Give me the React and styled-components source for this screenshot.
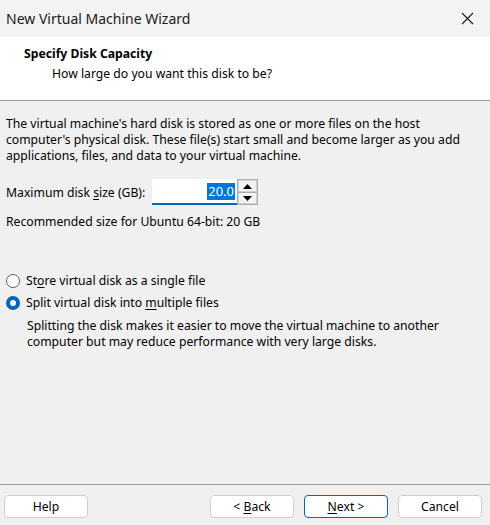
import styled, { createGlobalStyle } from "styled-components"

const GlobalStyle = createGlobalStyle`
  html, body {
    margin: 0;
    padding: 0;
    background: #f0f0f0;
  }
  body {
    font-family: "Noto Sans", "Open Sans", sans-serif;
    font-size: 12.2px;
    color: #000000;
  }
`

const Window = styled.div`
  width: 490px;
  height: 525px;
  display: flex;
  flex-direction: column;
  background: #f0f0f0;
  overflow: hidden;
`

const TitleBar = styled.div`
  height: 37px;
  flex-shrink: 0;
  display: flex;
  align-items: center;
  justify-content: space-between;
  padding-left: 6px;
  background: #f3f3f3;
  font-size: 14px;
  color: #1a1a1a;
`

const CloseButton = styled.div`
  width: 46px;
  height: 37px;
  display: flex;
  align-items: center;
  justify-content: center;
`

const Header = styled.div`
  height: 64px;
  flex-shrink: 0;
  background: #ffffff;
  border-bottom: 1px solid #a0a0a0;
  padding: 9px 0 0 24px;
  box-sizing: border-box;
`

const Heading = styled.div`
  font-weight: 700;
  font-size: 12.2px;
  line-height: 16px;
`

const SubHeading = styled.div`
  margin-top: 4px;
  padding-left: 28px;
  line-height: 16px;
`

const Content = styled.div`
  flex: 1;
  padding: 15px 6px 0 6px;
  display: flex;
  flex-direction: column;
`

const Paragraph = styled.p`
  margin: 0;
  line-height: 16px;
  white-space: nowrap;
`

const SizeRow = styled.div`
  display: flex;
  align-items: center;
  margin-top: 15px;
  height: 26px;
`

const SizeLabel = styled.span`
  width: 146px;
`

const Input = styled.div`
  width: 85px;
  height: 26px;
  box-sizing: border-box;
  background: #ffffff;
  border-bottom: 2px solid #0067c0;
  display: flex;
  align-items: center;
  justify-content: flex-end;
  padding-right: 2px;
`

const Selected = styled.span`
  background: #0078d7;
  color: #ffffff;
  font-size: 13px;
  line-height: 17px;
  padding: 0 1px;
`

const Spinner = styled.div`
  width: 21px;
  height: 26px;
  box-sizing: border-box;
  border: 1px solid #adadad;
  display: flex;
  flex-direction: column;
  background: #e5e5e5;
`

const SpinButton = styled.div`
  flex: 1;
  display: flex;
  align-items: center;
  justify-content: center;
  background: #f3f3f3;
  border: 1px solid #d0d0d0;
  & + & {
    border-top: 1px solid #adadad;
  }
`

const Recommended = styled.div`
  margin-top: 9px;
  line-height: 16px;
`

const Options = styled.div`
  margin-top: 43px;
  display: flex;
  flex-direction: column;
  gap: 6px;
`

const RadioRow = styled.label`
  display: flex;
  align-items: center;
  gap: 6px;
  height: 16px;
  line-height: 16px;
`

const RadioCircle = styled.span`
  width: 14px;
  height: 14px;
  box-sizing: border-box;
  border-radius: 50%;
  flex-shrink: 0;
  border: ${(p) => (p.$checked ? "4px solid #0067c0" : "1px solid #5d5d5d")};
  background: #ffffff;
`

const Description = styled.div`
  margin-top: 7px;
  padding-left: 21px;
`

const Footer = styled.div`
  flex-shrink: 0;
  height: 41px;
  border-top: 1px solid #a0a0a0;
  display: flex;
  align-items: flex-start;
  padding: 10px 8px 0 4px;
  box-sizing: border-box;
`

const Spacer = styled.div`
  flex: 1;
`

const Button = styled.button`
  width: 84px;
  height: 23px;
  box-sizing: border-box;
  margin-left: ${(p) => p.$gap || 0}px;
  background: #ffffff;
  border: 1px solid ${(p) => (p.$default ? "#0067c0" : "#d0d0d0")};
  border-radius: 4px;
  font-family: inherit;
  font-size: 12.2px;
  color: #000000;
  padding: 0;
`

const Key = styled.u`
  text-underline-offset: 2px;
`

export default function App() {
  return (
    <Window>
      <GlobalStyle />
      <TitleBar>
        New Virtual Machine Wizard
        <CloseButton>
          <svg width="13" height="13" viewBox="0 0 13 13">
            <path d="M1 1 L12 12 M12 1 L1 12" stroke="#1a1a1a" strokeWidth="1.1" />
          </svg>
        </CloseButton>
      </TitleBar>
      <Header>
        <Heading>Specify Disk Capacity</Heading>
        <SubHeading>How large do you want this disk to be?</SubHeading>
      </Header>
      <Content>
        <Paragraph>
          The virtual machine's hard disk is stored as one or more files on the host
          <br />
          computer's physical disk. These file(s) start small and become larger as you add
          <br />
          applications, files, and data to your virtual machine.
        </Paragraph>
        <SizeRow>
          <SizeLabel>
            Maximum disk <Key>s</Key>ize (GB):
          </SizeLabel>
          <Input>
            <Selected>20.0</Selected>
          </Input>
          <Spinner>
            <SpinButton>
              <svg width="9" height="5" viewBox="0 0 9 5">
                <path d="M0 5 L4.5 0 L9 5 Z" fill="#000" />
              </svg>
            </SpinButton>
            <SpinButton>
              <svg width="9" height="5" viewBox="0 0 9 5">
                <path d="M0 0 L4.5 5 L9 0 Z" fill="#000" />
              </svg>
            </SpinButton>
          </Spinner>
        </SizeRow>
        <Recommended>Recommended size for Ubuntu 64-bit: 20 GB</Recommended>
        <Options>
          <RadioRow>
            <RadioCircle />
            <span>
              St<Key>o</Key>re virtual disk as a single file
            </span>
          </RadioRow>
          <RadioRow>
            <RadioCircle $checked />
            <span>
              Split virtual disk into <Key>m</Key>ultiple files
            </span>
          </RadioRow>
        </Options>
        <Description>
          <Paragraph>
            Splitting the disk makes it easier to move the virtual machine to another
            <br />
            computer but may reduce performance with very large disks.
          </Paragraph>
        </Description>
      </Content>
      <Footer>
        <Button>Help</Button>
        <Spacer />
        <Button>
          &lt; <Key>B</Key>ack
        </Button>
        <Button $default $gap={10}>
          <Key>N</Key>ext &gt;
        </Button>
        <Button $gap={10}>Cancel</Button>
      </Footer>
    </Window>
  )
}
